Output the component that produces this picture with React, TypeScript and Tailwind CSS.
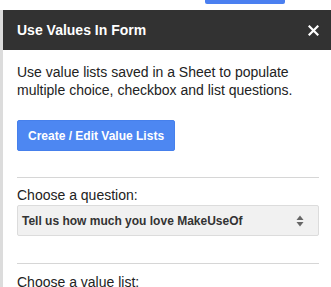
import React from 'react';

const App = () => {
    return (
        <div className="w-[331px] h-[287px] overflow-hidden bg-white font-['Liberation_Sans',Arial,sans-serif] text-[#222]">
            {/* Peek of the page button behind the sidebar */}
            <div className="h-[10px] pl-[205px]">
                <div className="w-[80px] h-[4px] rounded-b-[2px] bg-[#4a7ff0]" />
            </div>

            <div className="border-l-[3px] border-[#dcdcdc] h-full">
                {/* Title bar */}
                <div className="h-[40px] bg-[#323232] flex items-center justify-between pl-[14px] pr-[12px]">
                    <span className="text-white font-bold text-[14px]">Use Values In Form</span>
                    <svg width="11" height="11" viewBox="0 0 11 11">
                        <path d="M1.5 1.5 L9.5 9.5 M9.5 1.5 L1.5 9.5" stroke="white" strokeWidth="2.2" strokeLinecap="square" />
                    </svg>
                </div>

                <div className="pl-[14px] pr-[12px] pt-[13px]">
                    <p className="text-[14px] leading-[18px]">
                        Use value lists saved in a Sheet to populate multiple choice, checkbox and list questions.
                    </p>

                    <button className="mt-[21px] h-[31px] px-[10px] rounded-[2px] border border-[#4680ec] bg-[#4d87f2] text-white font-bold text-[12px]">
                        Create / Edit Value Lists
                    </button>

                    <div className="mt-[26px] border-t border-[#d6d6d6]" />

                    <div className="mt-[8px] text-[14px] leading-[18px]">Choose a question:</div>
                    <div className="mt-[1px] h-[31px] rounded-[2px] border border-[#dcdcdc] bg-[#f1f1f1] flex items-center justify-between pl-[4px] pr-[14px]">
                        <span className="font-bold text-[12px] text-[#333]">Tell us how much you love MakeUseOf</span>
                        <svg width="8" height="12" viewBox="0 0 8 12">
                            <path d="M4 0.5 L7.5 5 L0.5 5 Z" fill="#666" />
                            <path d="M4 11.5 L7.5 7 L0.5 7 Z" fill="#666" />
                        </svg>
                    </div>

                    <div className="mt-[27px] border-t border-[#d6d6d6]" />

                    <div className="mt-[9px] text-[14px] leading-[18px]">Choose a value list:</div>
                </div>
            </div>
        </div>
    );
};

export default App;
